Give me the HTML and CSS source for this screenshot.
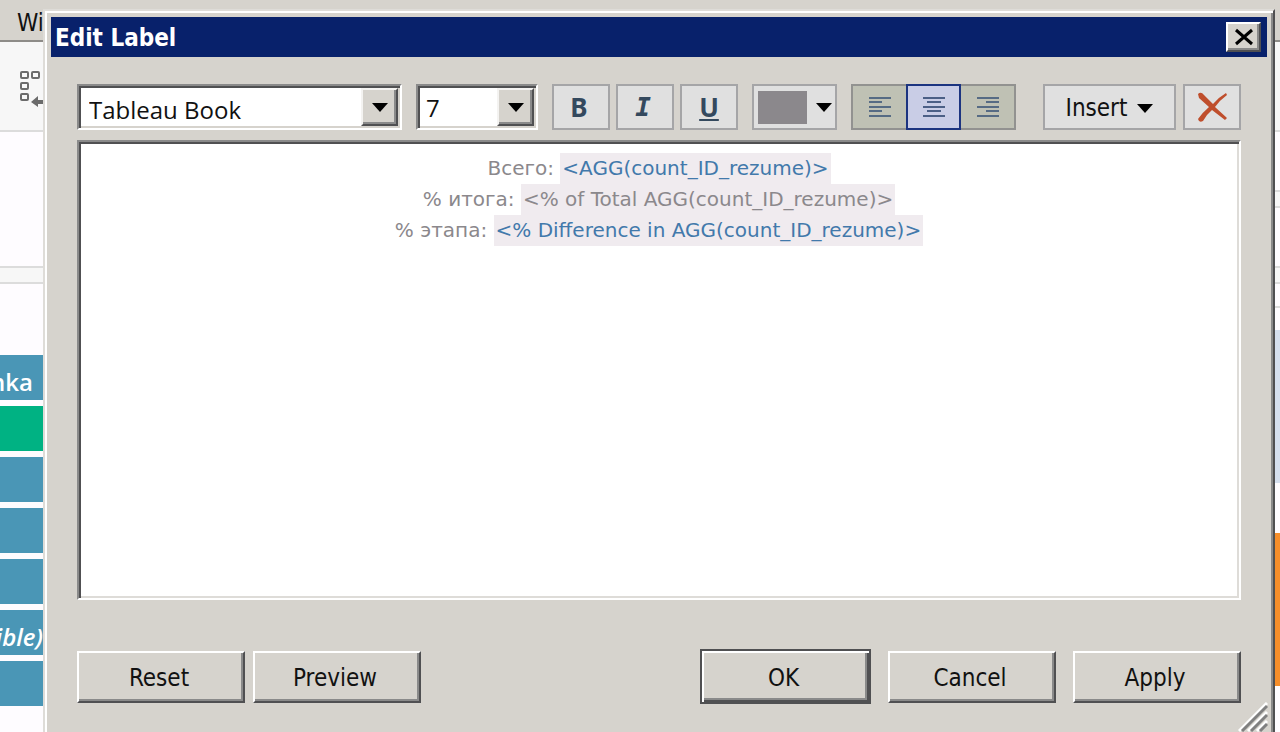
FILE: index.html
```html
<!DOCTYPE html>
<html lang="en">

<head>
  <meta charset="UTF-8">
  <meta name="viewport" content="width=device-width, initial-scale=1.0">
  <title>Edit Label</title>
  <link rel="stylesheet" href="styles.css">
</head>

<body>
  <!-- visible part of the workbook on the left -->
  <div class="sheet sheet-left">
    <div class="menu-bar">Wi</div>
    <div class="sheet-toolbar">
      <svg width="26" height="40" viewBox="0 0 26 40">
        <g fill="none" stroke="#6b6b6b" stroke-width="2">
          <rect x="3" y="2" width="7" height="6" rx="1" />
          <rect x="14" y="2" width="7" height="6" rx="1" />
          <rect x="3" y="13" width="7" height="6" rx="1" />
          <rect x="3" y="24" width="7" height="6" rx="1" />
        </g>
        <path d="M13 32 L20 26 V30 H26 V34 H20 V37 Z" fill="#6b6b6b" />
      </svg>
    </div>
    <div class="shelf"></div>
    <div class="divider"></div>
    <div class="marks">
      <div class="mark">nka</div>
      <div class="mark green"></div>
      <div class="mark"></div>
      <div class="mark"></div>
      <div class="mark"></div>
      <div class="mark italic">ible)</div>
      <div class="mark"></div>
    </div>
  </div>

  <div class="dialog" role="dialog" aria-labelledby="dialog-title">
    <div class="title-bar">
      <h1 id="dialog-title">Edit Label</h1>
      <button type="button" class="close" aria-label="Close">
        <svg width="20" height="18" viewBox="0 0 20 18">
          <path d="M2 2 L18 16 M18 2 L2 16" stroke="#000" stroke-width="3" />
        </svg>
      </button>
    </div>

    <form class="content">
      <div class="toolbar">
        <div class="combo combo-font">
          <select aria-label="Font">
            <option>Tableau Book</option>
          </select>
          <span class="combo-arrow"></span>
        </div>
        <div class="combo combo-size">
          <select aria-label="Font size">
            <option>7</option>
          </select>
          <span class="combo-arrow"></span>
        </div>
        <div class="style-buttons">
          <button type="button" class="tool bold">B</button>
          <button type="button" class="tool ital">I</button>
          <button type="button" class="tool under">U</button>
        </div>
        <button type="button" class="tool color" aria-label="Text color">
          <span class="swatch"></span>
          <span class="arrow"></span>
        </button>
        <div class="align-group">
          <button type="button" aria-label="Align left">
            <svg width="24" height="22" viewBox="0 0 24 22">
              <path d="M1 2H23M1 6H14M1 11H23M1 15H14M1 20H23" stroke="#566b84" stroke-width="2" />
            </svg>
          </button>
          <button type="button" class="active" aria-label="Align center" aria-pressed="true">
            <svg width="24" height="22" viewBox="0 0 24 22">
              <path d="M1 2H23M5 6H19M1 11H23M5 15H19M1 20H23" stroke="#4b5f86" stroke-width="2" />
            </svg>
          </button>
          <button type="button" aria-label="Align right">
            <svg width="24" height="22" viewBox="0 0 24 22">
              <path d="M1 2H23M10 6H23M1 11H23M10 15H23M1 20H23" stroke="#566b84" stroke-width="2" />
            </svg>
          </button>
        </div>
        <div class="insert-group">
          <button type="button" class="tool insert">Insert <span class="arrow"></span></button>
          <button type="button" class="tool" aria-label="Clear">
            <svg width="32" height="32" viewBox="0 0 32 32">
              <path d="M2 3 Q5 0 8 4 L17 13 Q23 6 30 2 L31 4 Q24 9 19 16 L31 27 L29 29 L16 19 Q10 24 7 30 Q3 32 2 28 Q7 21 13 16 L3 7 Z" fill="#bf4e2c" />
            </svg>
          </button>
        </div>
      </div>

      <div class="editor" contenteditable="true" role="textbox" aria-multiline="true" aria-label="Label text" spellcheck="false">
        <p>Всего: <span class="field blue">&lt;AGG(count_ID_rezume)&gt;</span></p>
        <p>% итога: <span class="field">&lt;% of Total AGG(count_ID_rezume)&gt;</span></p>
        <p>% этапа: <span class="field blue">&lt;% Difference in AGG(count_ID_rezume)&gt;</span></p>
      </div>

      <div class="buttons">
        <button type="button" class="push">Reset</button>
        <button type="button" class="push">Preview</button>
        <div class="buttons-right">
          <button type="submit" class="push default">OK</button>
          <button type="button" class="push">Cancel</button>
          <button type="button" class="push">Apply</button>
        </div>
      </div>
    </form>

    <svg class="grip" width="30" height="30" viewBox="0 0 30 30">
      <path d="M1 29 L29 1 M10 29 L29 10 M19 29 L29 19" stroke="#fff" stroke-width="3" />
      <path d="M4 29 L29 4 M13 29 L29 13 M22 29 L29 22" stroke="#808080" stroke-width="3" />
    </svg>
  </div>

  <!-- visible part of the workbook on the right -->
  <div class="sheet sheet-right">
    <div class="menu-bar"></div>
    <div class="sheet-toolbar"></div>
    <div class="row-card"></div>
    <div class="divider"></div>
    <div class="row-card"></div>
    <div class="divider"></div>
    <div class="row-head"></div>
    <div class="row-gap"></div>
    <div class="row-blue"></div>
    <div class="row-space"></div>
    <div class="row-orange"></div>
  </div>
</body>

</html>
```

FILE: styles.css
```css
* {
  box-sizing: border-box;
}

body {
  margin: 0;
  display: grid;
  grid-template-columns: 43px 1fr 5px;
  min-height: 100vh;
  background-color: #d6d3cd;
  font-family: "DejaVu Sans Condensed", "DejaVu Sans", sans-serif;
  font-size: 24px;
  color: #111;
}

button,
select {
  font: inherit;
  color: inherit;
  padding: 0;
  border-radius: 0;
}

/* workbook behind the dialog */
.sheet {
  overflow: hidden;
  background-color: #fefcff;
}

.menu-bar {
  height: 42px;
  padding-left: 17px;
  border-bottom: 2px solid #8e8c88;
  background-color: #d6d3cd;
  line-height: 46px;
  font-size: 24px;
}

.sheet-toolbar {
  height: 90px;
  padding: 28px 0 0 18px;
  border-bottom: 2px solid #dcdcdc;
  background-color: #f7f7f7;
}

.shelf {
  height: 134px;
}

.divider {
  height: 18px;
  border: 2px solid #dcdcdc;
  border-width: 2px 0;
  background-color: #f7f7f7;
}

.marks {
  display: flex;
  flex-direction: column;
  gap: 6px;
  padding-top: 71px;
}

.mark {
  display: flex;
  justify-content: flex-end;
  height: 45px;
  padding-right: 10px;
  background-color: #4a96b6;
  color: #fff;
  line-height: 54px;
  font-family: "Open Sans", sans-serif;
  font-weight: 600;
}

.mark.green {
  background-color: #00b283;
}

.mark.italic {
  padding-right: 0;
  font-style: italic;
}

.row-card {
  height: 58px;
}

.row-head {
  height: 24px;
  border-bottom: 2px solid #dcdcdc;
}

.row-gap {
  height: 22px;
}

.row-blue {
  height: 153px;
  background-color: #d5dfee;
}

.row-space {
  height: 50px;
}

.row-orange {
  height: 153px;
  background-color: #f68e2a;
}

/* dialog window */
.dialog {
  position: relative;
  display: flex;
  flex-direction: column;
  margin-top: 9px;
  padding: 6px;
  border: 2px solid #dedcd8;
  border-right-color: #505052;
  border-bottom: 0;
  background-color: #d6d3cd;
  box-shadow: inset 2px 2px #fff, inset -2px 0 #8a8a8a;
}

.title-bar {
  display: flex;
  align-items: center;
  justify-content: space-between;
  height: 40px;
  padding: 0 6px 0 4px;
  background-color: #08216b;
  color: #fff;
}

.title-bar h1 {
  margin: 0;
  padding-top: 2px;
  font-size: 24px;
}

.close {
  display: flex;
  align-items: center;
  justify-content: center;
  width: 35px;
  height: 30px;
  border: 2px solid #fff;
  border-right-color: #505052;
  border-bottom-color: #505052;
  background-color: #d6d3cd;
  box-shadow: inset -2px -2px #8a8a8a;
}

.content {
  flex: 1;
  display: flex;
  flex-direction: column;
  padding: 27px 26px 22px;
}

/* formatting toolbar */
.toolbar {
  display: flex;
  align-items: center;
  height: 46px;
  gap: 14px;
}

.combo {
  position: relative;
  height: 46px;
  border: 2px solid #8a8a8a;
  border-right-color: #fff;
  border-bottom-color: #fff;
  background-color: #fff;
  box-shadow: inset 2px 2px #505052, inset -2px -2px #d6d3cd;
}

.combo-font {
  width: 325px;
}

.combo-size {
  width: 122px;
}

.combo select {
  width: 100%;
  height: 100%;
  padding: 4px 40px 0 10px;
  border: 0;
  background: none;
  appearance: none;
  font-family: "Open Sans", sans-serif;
}

.combo-size select {
  padding-top: 0;
  padding-left: 8px;
}

.combo-arrow {
  position: absolute;
  top: 2px;
  right: 2px;
  bottom: 2px;
  display: flex;
  align-items: center;
  justify-content: center;
  width: 37px;
  border: 2px solid #f4f3f1;
  border-right-color: #505052;
  border-bottom-color: #505052;
  background-color: #d6d3cd;
  box-shadow: inset -2px -2px #8a8a8a;
  pointer-events: none;
}

.arrow,
.combo-arrow::after {
  content: "";
  border: 8px solid transparent;
  border-top: 9px solid #000;
  border-bottom: 0;
}

.style-buttons {
  display: flex;
  gap: 6px;
}

.tool {
  display: flex;
  align-items: center;
  justify-content: center;
  width: 58px;
  height: 46px;
  border: 2px solid #a5a5a7;
  background-color: #e0e0e0;
}

.bold,
.ital,
.under {
  padding-right: 4px;
  color: #34495e;
  font-family: "Noto Sans", sans-serif;
  font-size: 26px;
  font-weight: bold;
}

.ital {
  font-family: "DejaVu Sans Mono", monospace;
  font-style: italic;
}

.under {
  padding-right: 0;
  text-decoration: underline;
}

.color {
  width: 85px;
  gap: 9px;
}

.swatch {
  width: 49px;
  height: 33px;
  background-color: #8b888c;
}

.align-group {
  display: flex;
}

.align-group button {
  display: flex;
  align-items: center;
  justify-content: center;
  width: 55px;
  height: 46px;
  border: 2px solid #929290;
  border-width: 2px 0 2px 2px;
  background-color: #bfc1b4;
}

.align-group button:last-child {
  border-width: 2px 2px 2px 0;
}

.align-group .active {
  border: 2px solid #1c3480;
  background-color: #c9cde6;
}

.insert-group {
  display: flex;
  gap: 7px;
  margin-left: auto;
}

.insert {
  width: 133px;
  padding-top: 2px;
  gap: 10px;
}

/* label text */
.editor {
  flex: 1;
  margin-top: 10px;
  padding: 11px 10px;
  border: 2px solid #8a8a8a;
  border-right-color: #fff;
  border-bottom-color: #fff;
  background-color: #fff;
  box-shadow: inset 2px 2px #505052, inset -2px -2px #dedcd8;
  color: #8b888c;
  font-family: "DejaVu Sans", sans-serif;
  font-size: 20px;
  line-height: 31px;
  text-align: center;
  outline: none;
}

.editor p {
  margin: 0;
}

.field {
  display: inline-block;
  padding: 0 2px;
  background-color: #f0ebef;
}

.blue {
  color: #4279ab;
}

/* bottom buttons */
.buttons {
  display: flex;
  align-items: center;
  gap: 8px;
  height: 55px;
  margin-top: 49px;
}

.buttons-right {
  display: flex;
  align-items: center;
  gap: 17px;
  margin-left: auto;
}

.push {
  width: 168px;
  height: 52px;
  padding: 2px 4px 0 0;
  border: 2px solid #fff;
  border-right-color: #505052;
  border-bottom-color: #505052;
  background-color: #d6d3cd;
  box-shadow: inset -2px -2px #8a8a8a;
}

.default {
  width: 171px;
  height: 55px;
  border-color: #505052;
  box-shadow: inset 2px 2px #fff, inset -2px -2px #505052, inset -4px -4px #8a8a8a;
}

.grip {
  position: absolute;
  right: 5px;
  bottom: 0;
}
```
